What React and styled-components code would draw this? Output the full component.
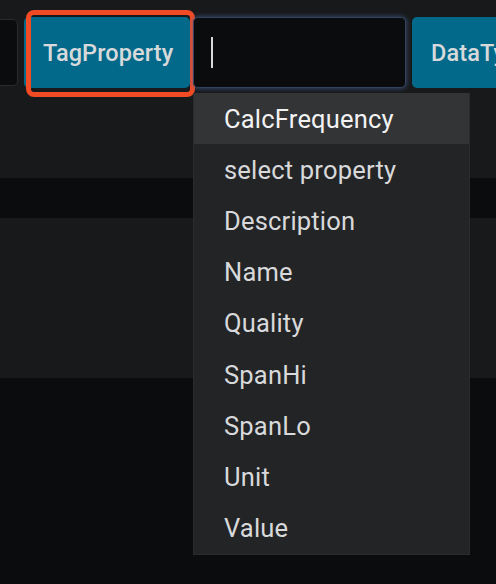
import React from "react";
import styled, { createGlobalStyle } from "styled-components";

const Global = createGlobalStyle`
  html, body { margin: 0; padding: 0; background: #0b0c0e; }
  body { font-family: Roboto, "Noto Sans", sans-serif; }
  * { box-sizing: border-box; }
`;

const Page = styled.div`
  width: 496px;
  height: 584px;
  overflow: hidden;
  display: flex;
  flex-direction: column;
  background: #0b0c0e;
`;

const TopBand = styled.div`
  height: 178px;
  background: #18191b;
  padding-top: 17px;
`;

const Band = styled.div`
  height: ${(p) => p.$h}px;
  background: ${(p) => p.$bg};
`;

const QueryRow = styled.div`
  display: flex;
  align-items: center;
  height: 71px;
  margin-left: -40px;
`;

const SideInput = styled.div`
  width: 58px;
  height: 67px;
  background: #0b0c0e;
  border: 1px solid #2a2b2e;
  border-radius: 5px;
  flex: none;
`;

const KeywordWrap = styled.div`
  position: relative;
  margin-left: 6px;
  flex: none;
`;

const Keyword = styled.div`
  height: 71px;
  display: flex;
  align-items: center;
  padding: 0 ${(p) => p.$pr ?? 17}px 0 19px;
  background: #02698a;
  color: #d8d9da;
  font-size: 23.5px;
  font-weight: 500;
  letter-spacing: 0.1px;
  border-radius: 5px;
  white-space: nowrap;
  ${(p) => (p.$width ? `width: ${p.$width}px;` : "")}
`;

const FocusRing = styled.div`
  position: absolute;
  top: -7px;
  bottom: -9px;
  left: 2px;
  right: -5px;
  border: 5px solid #f04b25;
  border-radius: 8px;
  pointer-events: none;
`;

const InputWrap = styled.div`
  position: relative;
  margin-left: 3px;
  flex: none;
`;

const Input = styled.div`
  width: 213px;
  height: 71px;
  background: #0b0c0e;
  border: 1px solid #33425e;
  border-radius: 5px;
  box-shadow: 0 0 4px 1px rgba(72, 104, 160, 0.55);
  display: flex;
  align-items: center;
  padding-left: 17px;
`;

const Caret = styled.span`
  width: 2px;
  height: 31px;
  background: #d8d9da;
`;

const Menu = styled.ul`
  position: absolute;
  top: 76px;
  left: 0;
  width: 277px;
  margin: 0;
  padding: 0;
  list-style: none;
  background: #232426;
  border: 1px solid #2a2b2d;
  border-top: none;
  z-index: 10;
`;

const Item = styled.li`
  height: 51.2px;
  display: flex;
  align-items: center;
  padding-left: 30px;
  font-size: 25.5px;
  letter-spacing: 0.2px;
  color: ${(p) => (p.$active ? "#f2f2f3" : "#d8d9da")};
  background: ${(p) => (p.$active ? "#333436" : "transparent")};
  white-space: nowrap;
`;

const items = [
  "CalcFrequency",
  "select property",
  "Description",
  "Name",
  "Quality",
  "SpanHi",
  "SpanLo",
  "Unit",
  "Value",
];

export default function App() {
  return (
    <Page>
      <Global />
      <TopBand>
        <QueryRow>
          <SideInput />
          <KeywordWrap>
            <Keyword $width={166}>TagProperty</Keyword>
            <FocusRing />
          </KeywordWrap>
          <InputWrap>
            <Input>
              <Caret />
            </Input>
            <Menu>
              {items.map((it, i) => (
                <Item key={it} $active={i === 0}>
                  {it}
                </Item>
              ))}
            </Menu>
          </InputWrap>
          <KeywordWrap>
            <Keyword $pr={40}>DataType</Keyword>
          </KeywordWrap>
        </QueryRow>
      </TopBand>
      <Band $h={40} $bg="#0b0c0e" />
      <Band $h={160} $bg="#18191b" />
      <Band $h={206} $bg="#0b0c0e" />
    </Page>
  );
}
